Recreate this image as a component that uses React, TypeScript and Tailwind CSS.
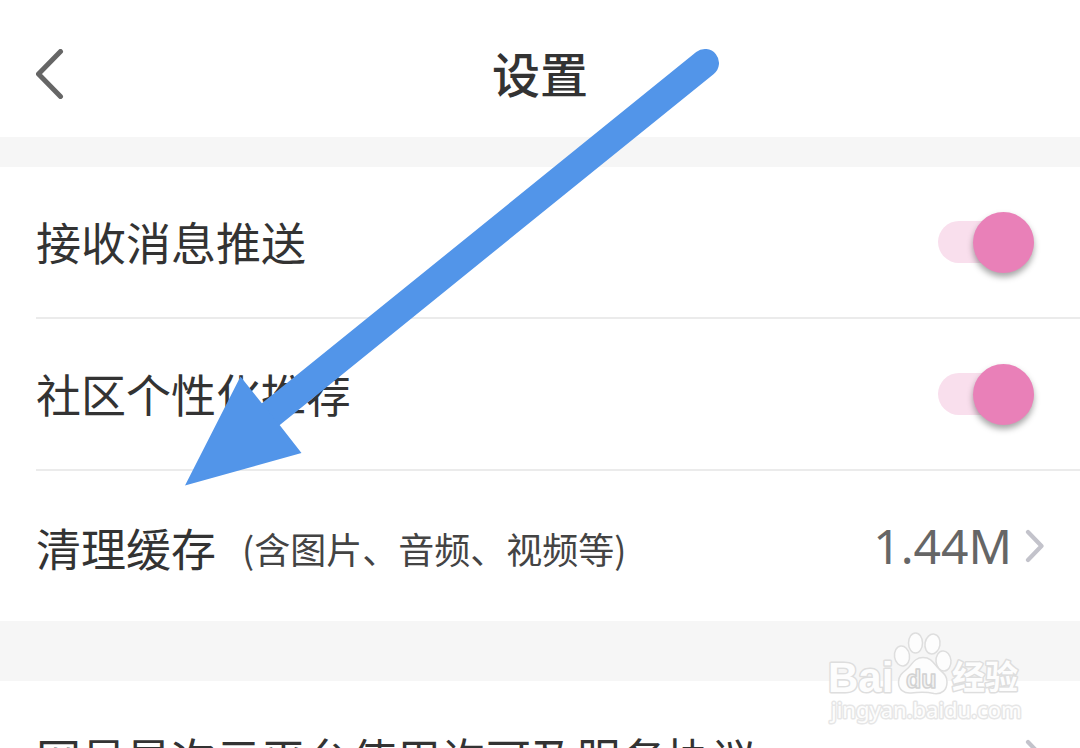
import type { ReactNode } from "react";

interface SwitchRowProps {
  id: string;
  label: string;
}

function Chevron() {
  return (
    <svg className="h-9 w-5 shrink-0" viewBox="0 0 20 36" fill="none" aria-hidden>
      <path
        d="M4 4 L17.500 18 L4 32"
        stroke="#c3c3cb"
        strokeWidth="4.200"
        strokeLinecap="round"
        strokeLinejoin="round"
      />
    </svg>
  );
}

function SwitchRow({ id, label }: SwitchRowProps) {
  return (
    <div className="ml-9 flex h-[152px] items-center justify-between border-b-2 border-[#ebebeb] pr-[46px]">
      <label htmlFor={id} className="text-[45px] leading-[60px]">
        {label}
      </label>
      <input
        id={id}
        type="checkbox"
        role="switch"
        defaultChecked
        className="flex h-[42px] w-24 shrink-0 cursor-pointer appearance-none items-center rounded-full bg-[#f9dfed] before:size-[61px] before:shrink-0 before:rounded-full before:bg-[#e980b8] before:shadow-[0_4px_6px_rgba(0,0,0,0.35)] before:content-[''] checked:justify-end"
      />
    </div>
  );
}

function LinkRow({ children, value }: { children: ReactNode; value?: string }) {
  return (
    <a href="#" className="flex h-[150px] shrink-0 items-center justify-between px-9">
      <span className="flex items-center pt-[3px] text-[45px] leading-[60px] whitespace-nowrap">{children}</span>
      <span className="flex items-center gap-3">
        {value && (
          <span className="font-['Noto_Sans',sans-serif] text-[48px] leading-[60px] text-[#666666]">
            {value}
          </span>
        )}
        <Chevron />
      </span>
    </a>
  );
}

function Arrow() {
  return (
    <svg
      className="pointer-events-none absolute top-0 left-0"
      width="740"
      height="500"
      viewBox="0 0 740 500"
      aria-hidden
    >
      <path d="M271 414 L705 63" stroke="#5295e9" strokeWidth="28" strokeLinecap="round" />
      <path d="M185 485.500 L240.500 376.500 L262 403.500 L280 425.500 L301.500 453 Z" fill="#5295e9" />
    </svg>
  );
}

function Watermark() {
  return (
    <svg
      className="pointer-events-none absolute right-[50px] bottom-4"
      width="210"
      height="108"
      viewBox="820 624 210 108"
      fill="#fdfdfd"
      stroke="#dedede"
      strokeLinejoin="round"
      aria-hidden
    >
      <g paintOrder="stroke" strokeWidth="3">
        <text x="828" y="692" fontFamily="Liberation Sans" fontWeight="700" fontSize="42">
          Bai
        </text>
        <text x="952" y="689" fontFamily="Noto Sans CJK SC" fontWeight="700" fontSize="33">
          经验
        </text>
        <text x="831" y="718" fontFamily="Noto Sans" fontSize="22" stroke="#e6e6e6">
          jingyan.baidu.com
        </text>
      </g>
      <g strokeWidth="1.500">
        <ellipse cx="902" cy="656" rx="7.500" ry="10" transform="rotate(-8 902 656)" />
        <ellipse cx="915.500" cy="643" rx="7" ry="10" />
        <ellipse cx="932.500" cy="644" rx="7.500" ry="10" transform="rotate(10 932.500 644)" />
        <ellipse cx="943.500" cy="661" rx="7.500" ry="10" transform="rotate(-5 943.500 661)" />
        <path d="M923 657.500 C914 657.500 912 665 907 669 C902 673 898.500 676 898.500 682 C898.500 690 904 693.500 911 693 C918 692 928 692 934 693.500 C942 694.500 947 690 947 682 C947 675 943 673 939 669 C934 664 932 657.500 923 657.500 Z" />
        <text x="906" y="688" fontFamily="Liberation Sans" fontWeight="700" fontSize="25" fill="#f3f3f3" stroke="#d2d2d2">
          du
        </text>
      </g>
    </svg>
  );
}

export default function App() {
  return (
    <div className="relative h-screen overflow-hidden bg-white font-['Noto_Sans_CJK_SC',sans-serif] text-[#333333]">
      <header className="grid h-[137px] grid-cols-[1fr_auto_1fr] items-center px-9 pt-[10px]">
        <button type="button" aria-label="返回" className="w-7 cursor-pointer">
          <svg className="h-[50px] w-7" viewBox="0 0 28 50" fill="none" aria-hidden>
            <path
              d="M24.500 2.500 L2.500 25 L24.500 47.500"
              stroke="#666666"
              strokeWidth="5"
              strokeLinecap="round"
              strokeLinejoin="round"
            />
          </svg>
        </button>
        <h1 className="pb-[3px] text-[48px] leading-[60px] font-medium">设置</h1>
      </header>

      <main className="bg-[#f6f6f6] pt-[30px]">
        <section className="bg-white">
          <SwitchRow id="push" label="接收消息推送" />
          <SwitchRow id="recommend" label="社区个性化推荐" />
          <LinkRow value="1.44M">
            清理缓存
            <small className="ml-[26px] text-[36px] leading-[60px] text-[#444444]">
              (含图片、音频、视频等)
            </small>
          </LinkRow>
        </section>

        <section className="mt-[60px] bg-white">
          <LinkRow>网易星次元平台使用许可及服务协议</LinkRow>
        </section>
      </main>

      <Arrow />
      <Watermark />
    </div>
  );
}
